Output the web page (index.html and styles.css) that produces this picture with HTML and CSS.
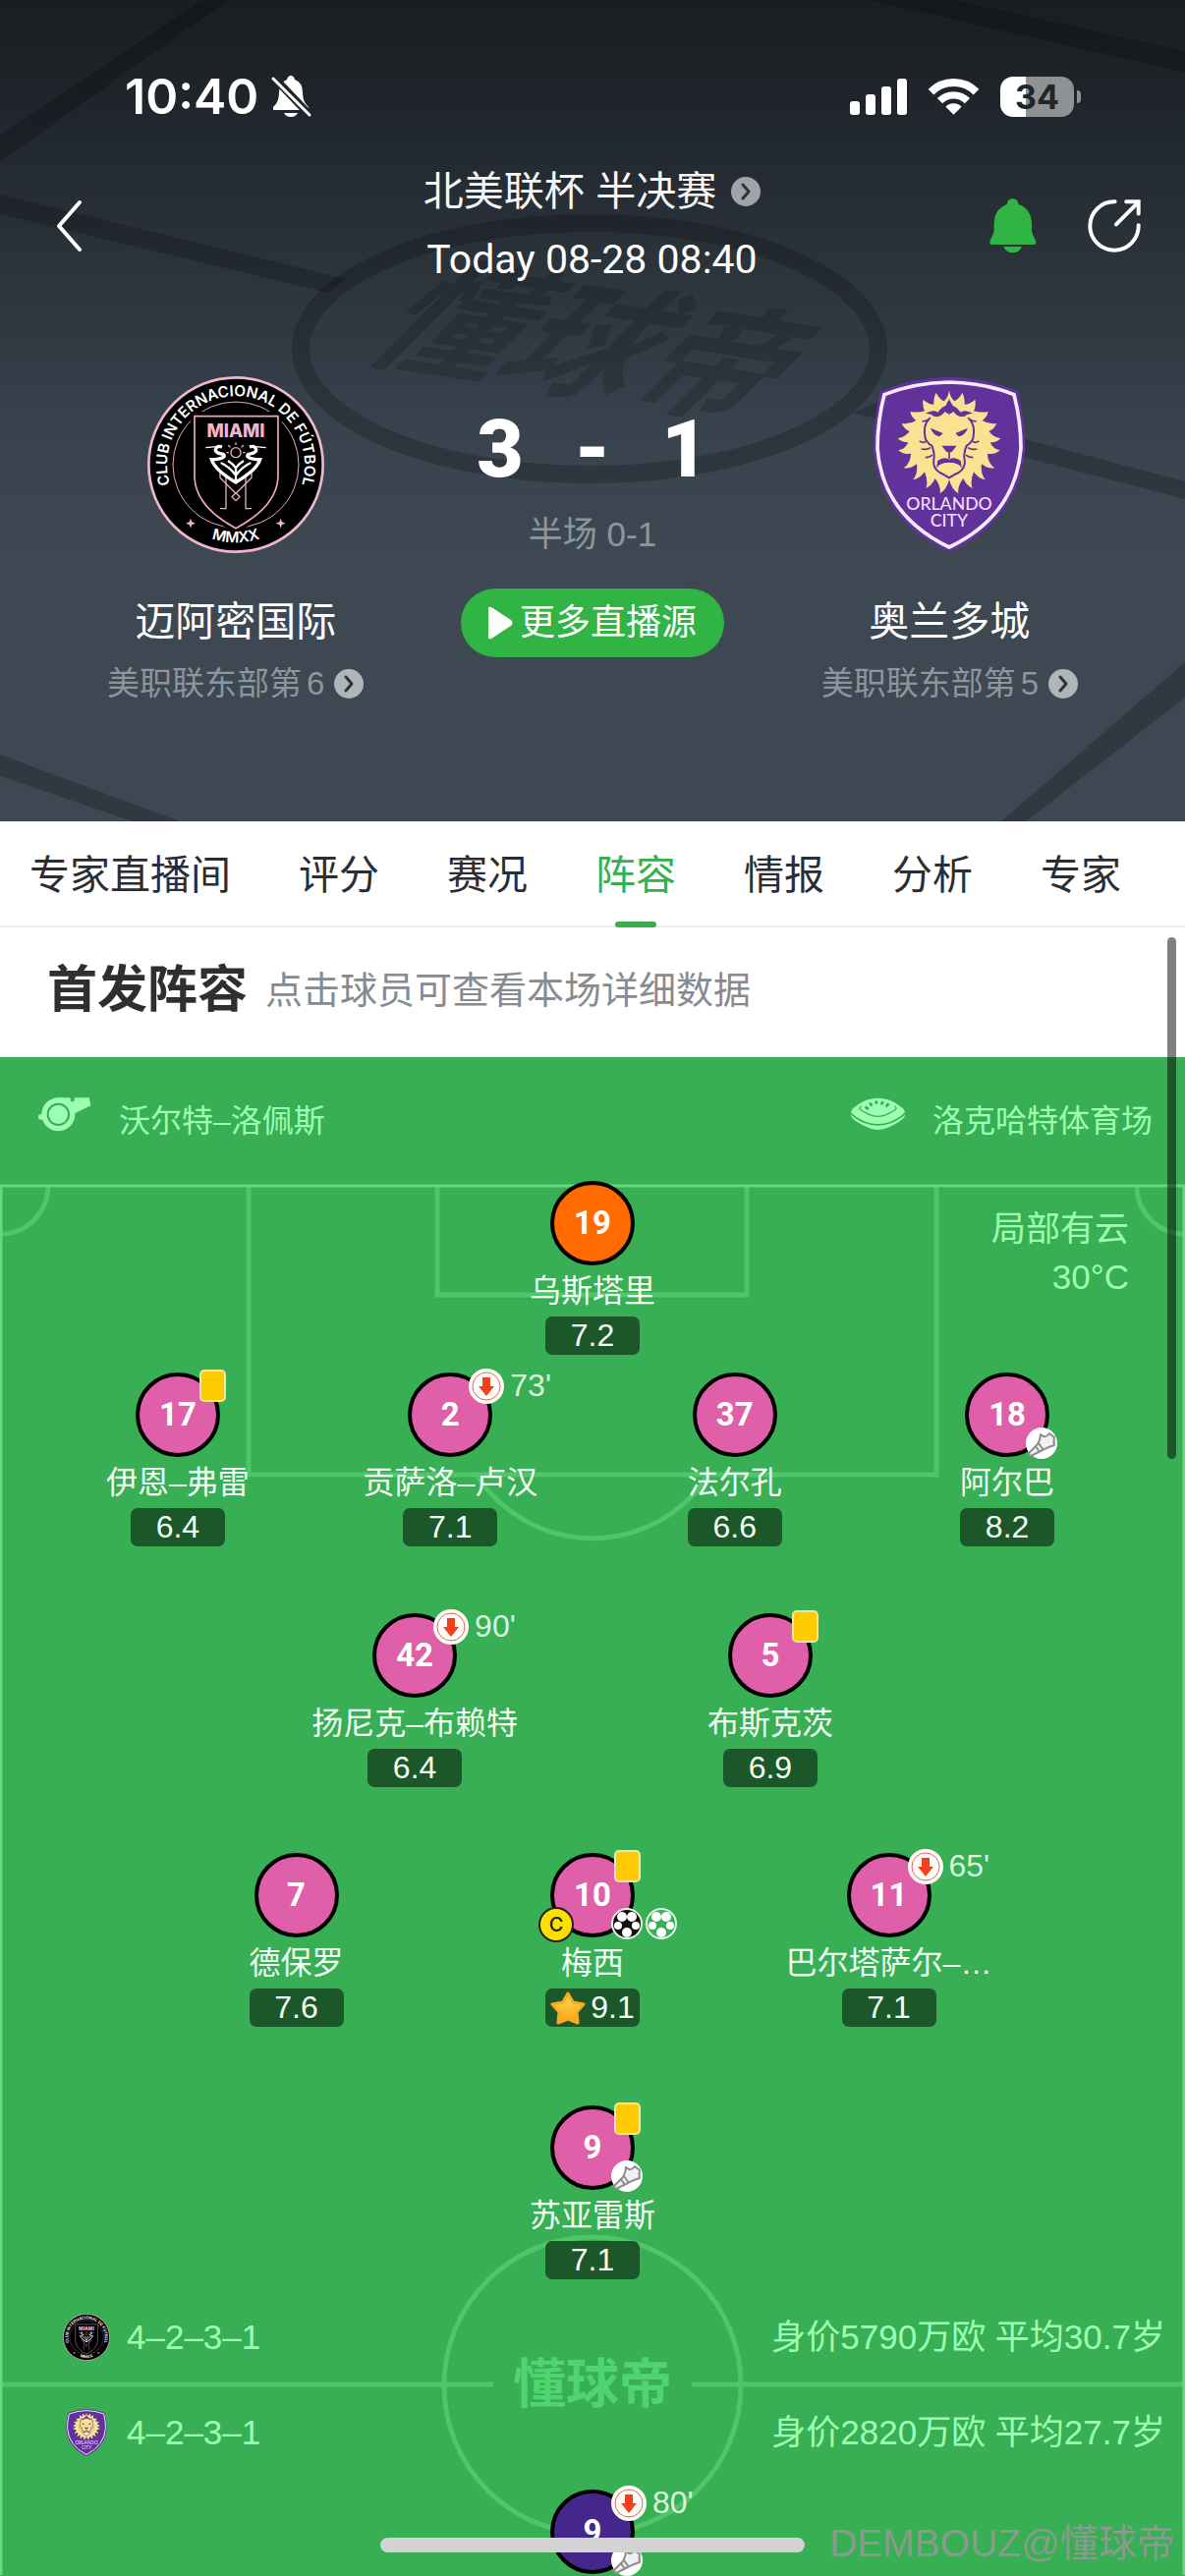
FILE: index.html
```html
<!DOCTYPE html>
<html lang="zh-CN">
<head>
  <meta charset="UTF-8" />
  <meta name="viewport" content="width=device-width, initial-scale=1.0" />
  <title>迈阿密国际 3-1 奥兰多城 - 阵容</title>
  <link rel="stylesheet" href="styles.css">
</head>
<body>
  <!-- shared icons -->
  <svg class="defs" width="0" height="0" aria-hidden="true">
    <symbol id="miami" viewBox="60 42 540 540">
      <circle cx="330" cy="312" r="266" fill="#000" stroke="#efb6ce" stroke-width="8" />
      <circle cx="330" cy="312" r="192" fill="none" stroke="#e9a9c4" stroke-width="3" />
      <path d="M192 150H470V360Q464 455 330 520Q196 455 192 360Z" fill="#000" />
      <path d="M204 164H459V350Q455 440 330 506Q207 440 204 350Z" fill="#000" stroke="#e9a9c4" stroke-width="5" />
      <path id="ringTop" d="M152 424A210 210 0 1 1 508 424" fill="none" />
      <path id="ringBottom" d="M180 496A237 237 0 0 0 480 496" fill="none" />
      <text class="crest-ring"><textPath href="#ringTop" startOffset="50%" text-anchor="middle">CLUB INTERNACIONAL DE FÚTBOL</textPath></text>
      <text class="crest-ring"><textPath href="#ringBottom" startOffset="50%" text-anchor="middle">MMXX</textPath></text>
      <text class="crest-miami" x="330" y="229" text-anchor="middle">MIAMI</text>
      <path d="M192 476l4 11 11 4-11 4-4 11-4-11-11-4 11-4zM467 476l4 11 11 4-11 4-4 11-4-11-11-4 11-4z" fill="#f0b5ce" />
      <g fill="none" stroke="#e9a9c4" stroke-width="4">
        <circle cx="330" cy="275" r="15" />
        <path d="M330 252v-8M313 259l-6-7M347 259l6-7M308 275h-7M352 275h7" />
        <path d="M282 332v20l48 48 48-48v-20M330 398l-12 12 12 12 12-12zM300 350v96h-18M360 350v96h18" />
      </g>
      <g fill="none" stroke="#fff" stroke-width="10">
        <path d="M288 258Q272 252 268 266Q266 276 292 280Q304 290 268 296L256 296Q266 328 330 366Q394 328 404 296L392 296Q356 290 368 280Q394 276 392 266Q388 252 372 258" />
        <path d="M284 306Q310 318 330 344Q350 318 376 306M306 300Q322 310 330 322Q338 310 354 300M330 322v42" stroke-width="7" />
        <path d="M280 256l-42 4M380 256l42 4" stroke-width="4" />
      </g>
    </symbol>
    <symbol id="orlando" viewBox="52 42 470 540">
      <path d="M287 44Q400 46 497 88Q519 180 519 260Q505 480 287 580Q69 480 55 260Q55 180 77 88Q174 46 287 44Z" fill="#61329a" />
      <path d="M287 60Q395 62 485 98Q506 180 506 262Q490 466 287 564Q84 466 68 262Q68 180 89 98Q179 62 287 60Z" fill="none" stroke="#faeaff" stroke-width="11" />
      <path d="M287 85Q290 108 303 118Q318 110 327 92Q336 108 334 128Q350 128 366 113Q370 132 362 148Q382 154 406 150Q402 168 388 177Q408 190 432 186Q426 202 408 210Q422 228 444 232Q432 244 412 244Q420 264 442 268Q428 282 404 278Q404 306 426 322Q406 326 386 310Q382 340 398 358Q378 356 362 334Q350 364 358 384Q340 376 330 354Q312 376 315 400Q296 390 287 358Q278 390 259 400Q262 376 244 354Q234 376 216 384Q224 364 212 334Q196 356 176 358Q192 340 188 310Q168 326 148 322Q170 306 170 278Q146 282 132 268Q154 264 162 244Q142 244 130 232Q152 228 166 210Q148 202 142 186Q166 190 186 177Q172 168 168 150Q192 154 212 148Q204 132 208 113Q224 128 240 128Q238 108 247 92Q256 110 271 118Q284 108 287 85Z" fill="#fbe192" />
      <g fill="#61329a">
        <path d="M214 156Q238 142 252 152Q266 134 276 132L287 112L298 132Q308 134 322 152Q336 142 360 156Q344 154 334 164Q314 170 300 150L287 158L274 150Q260 170 240 164Q230 154 214 156Z" />
        <path d="M230 200L268 216L258 226Q238 222 230 200ZM344 200L306 216L316 226Q336 222 344 200ZM264 254H310L294 274H280ZM252 300Q270 286 287 296Q304 286 322 300L326 322Q316 306 287 306Q258 306 248 322Z" />
      </g>
      <g fill="none" stroke="#61329a" stroke-width="6">
        <path d="M226 172Q206 190 214 232Q222 248 234 254Q244 280 240 296Q236 322 258 336Q272 342 287 352Q302 342 316 336Q338 322 334 296Q330 280 340 254Q352 248 360 232Q368 190 348 172" />
        <path d="M204 180Q222 178 230 168M370 180Q352 178 344 168M287 274V294M196 240Q210 248 216 240M378 240Q364 248 358 240M202 264Q218 268 230 260M372 264Q356 268 344 260M214 290Q228 290 236 282M360 290Q346 290 338 282" stroke-width="5" />
      </g>
      <ellipse cx="287" cy="322" rx="30" ry="17" fill="#fbe192" />
      <text class="crest-orlando" x="287" y="451" text-anchor="middle">ORLANDO</text>
      <text class="crest-orlando" x="287" y="500" text-anchor="middle">CITY</text>
    </symbol>
    <symbol id="more" viewBox="0 0 30 30">
      <circle cx="15" cy="15" r="15" fill="currentColor" />
      <path d="M12 8L18 15L12 22" fill="none" stroke="#2c343c" stroke-width="3" stroke-linecap="round" stroke-linejoin="round" />
    </symbol>
    <symbol id="off" viewBox="0 0 36 36">
      <circle cx="18" cy="18" r="18" fill="#fffdf8" />
      <circle cx="18" cy="18" r="14" fill="none" stroke="#e0665a" stroke-width="1" />
      <path d="M14 9h8v9h4l-8 10-8-10h4z" fill="#f2401f" />
    </symbol>
    <symbol id="boot" viewBox="0 0 32 32">
      <circle cx="16" cy="16" r="16" fill="#fff" />
      <path d="M15 7L18 9Q21 10 24 6L29 10Q28 13 29 18Q22 20 17 23L5 29Q2 28 4 25L12 17Q15 12 15 7ZM10 19L14 25M13 16L18 23" fill="#f1f1f1" stroke="#8c8c8c" stroke-width="2" stroke-linejoin="round" />
    </symbol>
    <symbol id="ball" viewBox="0 0 32 32">
      <circle cx="16" cy="16" r="15" fill="currentColor" stroke="#e6f5e9" stroke-width="2" />
      <g fill="#fff">
        <circle cx="11" cy="9" r="5" />
        <circle cx="21" cy="9" r="5" />
        <circle cx="7" cy="18" r="4" />
        <circle cx="25" cy="18" r="4" />
        <circle cx="16" cy="25" r="5" />
      </g>
    </symbol>
  </svg>

  <header class="match">
    <svg class="match-bg" viewBox="0 0 1206 837" preserveAspectRatio="xMidYMin slice" aria-hidden="true">
      <g fill="#000" opacity="0.2">
        <path d="M205 0H232L0 165V138ZM885 0H972L1206 52V74ZM0 198L352 284L334 298L0 218ZM868 420L896 408L1206 490V508ZM0 768L186 837H138L0 790ZM1206 674V710L1043 837H1018Z" />
      </g>
      <ellipse cx="600" cy="355" rx="294" ry="128" fill="none" stroke="#000" stroke-width="18" opacity="0.2" />
      <text class="bg-logo" transform="translate(604 352) rotate(9) skewX(-36)" text-anchor="middle" y="46">懂球帝</text>
    </svg>

    <div class="status">
      <span class="time">10:40</span>
      <svg width="42" height="44" viewBox="0 0 42 44">
        <path d="M21 1Q24 1 25 5Q33 8 33 18Q33 28 39 33V36H3V33Q9 28 9 18Q9 8 17 5Q18 1 21 1ZM14 39H28Q26 43 21 43Q16 43 14 39Z" fill="#fff" />
        <path d="M2 1L42 43" stroke="#1f252b" stroke-width="8" />
        <path d="M3 4L40 41" stroke="#fff" stroke-width="3" stroke-linecap="round" />
      </svg>
      <div class="signals">
        <svg width="58" height="38" viewBox="0 0 58 38" fill="#fff">
          <rect y="24" width="10" height="14" rx="3" /><rect x="16" y="17" width="10" height="21" rx="3" />
          <rect x="32" y="9" width="10" height="29" rx="3" /><rect x="48" y="1" width="10" height="37" rx="3" />
        </svg>
        <svg width="51" height="38" viewBox="316 55 152 114" fill="none" stroke="#fff">
          <path d="M323 99A97 97 0 0 1 461 99" stroke-width="24" />
          <path d="M350 126A59 59 0 0 1 434 126" stroke-width="22" />
          <path d="M392 168L368 144A34 34 0 0 1 416 144Z" fill="#fff" stroke="none" />
        </svg>
        <span class="battery">34</span>
      </div>
    </div>

    <nav class="topbar">
      <button class="icon-btn" aria-label="返回">
        <svg width="28" height="54" viewBox="0 0 28 54"><path d="M25 3L4 27L25 51" fill="none" stroke="#fff" stroke-width="4" stroke-linecap="round" stroke-linejoin="round" /></svg>
      </button>
      <div class="title">
        <a class="league" href="#">北美联杯 半决赛 <svg width="30" height="30"><use href="#more" /></svg></a>
        <p class="kickoff">Today 08-28 08:40</p>
      </div>
      <div class="actions">
        <button class="icon-btn" aria-label="提醒">
          <svg width="48" height="56" viewBox="505 420 144 168" fill="#30b444">
            <path d="M576 421Q592 421 594 438Q634 452 634 500V518Q636 532 645 546Q651 561 638 561H515Q502 561 508 546Q517 532 519 518V500Q519 452 558 438Q560 421 576 421ZM548 567H604Q596 586 576 586Q556 586 548 567Z" />
          </svg>
        </button>
        <button class="icon-btn" aria-label="分享">
          <svg width="54" height="54" viewBox="800 422 164 164" fill="none" stroke="#fff" stroke-width="12" stroke-linecap="round">
            <path d="M884 429A75 75 0 1 0 957 502M888 499L954 433" />
            <path d="M919 429H957V466" stroke-linejoin="miter" />
          </svg>
        </button>
      </div>
    </nav>

    <section class="scoreboard">
      <div class="team">
        <svg class="crest" role="img" aria-label="Inter Miami"><use href="#miami" /></svg>
        <h2>迈阿密国际</h2>
        <a class="rank" href="#">美职联东部第<span>6</span><svg width="30" height="30"><use href="#more" /></svg></a>
      </div>
      <div class="result">
        <div class="score"><b>3</b><b>-</b><b>1</b></div>
        <p class="half">半场 0-1</p>
        <button class="live">
          <svg width="28" height="34" viewBox="0 0 28 34"><path d="M2 2V32Q2 34 5 33L25 20Q28 17 25 14L5 1Q2 0 2 2Z" fill="#fff" /></svg>更多直播源
        </button>
      </div>
      <div class="team">
        <svg class="crest" role="img" aria-label="Orlando City"><use href="#orlando" /></svg>
        <h2>奥兰多城</h2>
        <a class="rank" href="#">美职联东部第<span>5</span><svg width="30" height="30"><use href="#more" /></svg></a>
      </div>
    </section>
  </header>

  <nav class="tabs">
    <a href="#">专家直播间</a>
    <a href="#">评分</a>
    <a href="#">赛况</a>
    <a href="#" class="active">阵容</a>
    <a href="#">情报</a>
    <a href="#">分析</a>
    <a href="#">专家</a>
  </nav>

  <main>
    <div class="section-title">
      <h1>首发阵容</h1>
      <p>点击球员可查看本场详细数据</p>
    </div>

    <section class="lineup">
      <div class="officials">
        <svg width="54" height="36" viewBox="58 80 162 108">
          <path d="M119 84H155L157 96H167L169 84H213L218 108L160 136L119 135Z" fill="#9dffb3" />
          <circle cx="119" cy="135" r="51" fill="#9dffb3" />
          <circle cx="66" cy="143" r="8" fill="#9dffb3" />
          <circle cx="119" cy="135" r="32" fill="none" stroke="#38af54" stroke-width="6" />
        </svg>
        <span>沃尔特–洛佩斯</span>
        <svg class="stadium" width="55" height="34" viewBox="80 84 166 98">
          <path d="M163 84Q192 85 216 98L240 116Q250 128 244 142Q238 152 204 170Q163 192 122 170Q88 152 82 142Q76 128 86 116L110 98Q134 85 163 84Z" fill="#9dffb3" />
          <path d="M80 130Q90 144 122 158Q163 174 204 158Q236 144 246 130" fill="none" stroke="#38af54" stroke-width="5" />
          <path d="M112 108Q100 116 116 124L136 134Q163 146 190 134L210 124Q226 116 214 108" fill="none" stroke="#38af54" stroke-width="4" />
          <path d="M124 110L134 118M138 98L144 108M158 92V102M178 94L174 104M196 100L188 110" stroke="#38af54" stroke-width="8" />
        </svg>
        <span>洛克哈特体育场</span>
      </div>

      <div class="field">
        <svg class="lines" viewBox="0 0 1206 1416" preserveAspectRatio="xMidYMin slice" aria-hidden="true">
          <g fill="none" stroke="#4fc56c" stroke-width="5">
            <path d="M253 2V296H953V2M445 2V113H760V2" />
            <path d="M485 296A140 140 0 0 0 721 296" />
            <path d="M49 2A49 49 0 0 1 0 51M1157 2A49 49 0 0 0 1206 51" />
            <circle cx="603" cy="1223" r="151" />
            <path d="M0 1222H502M704 1222H1206" />
          </g>
          <path d="M1 1416V2H1205V1416" fill="none" stroke="#65d880" stroke-width="3" />
          <text class="field-logo" x="603" y="1241" text-anchor="middle">懂球帝</text>
        </svg>

        <p class="weather">局部有云<br>30°C</p>

        <div class="row row-1">
          <button class="player">
            <span class="shirt keeper">19</span>
            <span class="name">乌斯塔里</span>
            <span class="rating">7.2</span>
          </button>
        </div>

        <div class="row row-4">
          <button class="player">
            <span class="shirt">17<i class="card"></i></span>
            <span class="name">伊恩–弗雷</span>
            <span class="rating">6.4</span>
          </button>
          <button class="player">
            <span class="shirt">2<span class="sub"><svg width="36" height="36"><use href="#off" /></svg>73'</span></span>
            <span class="name">贡萨洛–卢汉</span>
            <span class="rating">7.1</span>
          </button>
          <button class="player">
            <span class="shirt">37</span>
            <span class="name">法尔孔</span>
            <span class="rating">6.6</span>
          </button>
          <button class="player">
            <span class="shirt">18<span class="events"><svg width="32" height="32"><use href="#boot" /></svg></span></span>
            <span class="name">阿尔巴</span>
            <span class="rating">8.2</span>
          </button>
        </div>

        <div class="row row-2">
          <button class="player">
            <span class="shirt">42<span class="sub"><svg width="36" height="36"><use href="#off" /></svg>90'</span></span>
            <span class="name">扬尼克–布赖特</span>
            <span class="rating">6.4</span>
          </button>
          <button class="player">
            <span class="shirt">5<i class="card"></i></span>
            <span class="name">布斯克茨</span>
            <span class="rating">6.9</span>
          </button>
        </div>

        <div class="row row-3">
          <button class="player">
            <span class="shirt">7</span>
            <span class="name">德保罗</span>
            <span class="rating">7.6</span>
          </button>
          <button class="player">
            <span class="shirt">10<i class="card"></i><span class="captain">C</span>
              <span class="events">
                <svg class="goal" width="32" height="32"><use href="#ball" /></svg>
                <svg class="chance" width="32" height="32"><use href="#ball" /></svg>
              </span>
            </span>
            <span class="name">梅西</span>
            <span class="rating best">
              <svg width="36" height="34" viewBox="0 0 36 34">
                <defs><linearGradient id="gold" x1="0" y1="0" x2="0" y2="1"><stop offset="0" stop-color="#ffdf4a" /><stop offset="1" stop-color="#f9a01b" /></linearGradient></defs>
                <path d="M18 2L23 11L34 13L27 21L28 32L18 28L8 32L9 21L2 13L13 11Z" fill="url(#gold)" stroke="#f9ab22" stroke-width="3" stroke-linejoin="round" />
              </svg>9.1
            </span>
          </button>
          <button class="player">
            <span class="shirt">11<span class="sub"><svg width="36" height="36"><use href="#off" /></svg>65'</span></span>
            <span class="name">巴尔塔萨尔–…</span>
            <span class="rating">7.1</span>
          </button>
        </div>

        <div class="row row-1 striker">
          <button class="player">
            <span class="shirt">9<i class="card"></i><span class="events"><svg width="32" height="32"><use href="#boot" /></svg></span></span>
            <span class="name">苏亚雷斯</span>
            <span class="rating">7.1</span>
          </button>
        </div>

        <div class="formations">
          <div class="formation">
            <svg width="48" height="48"><use href="#miami" /></svg>
            <span>4–2–3–1</span>
            <span class="value">身价5790万欧 平均30.7岁</span>
          </div>
          <div class="formation">
            <svg width="48" height="48"><use href="#orlando" /></svg>
            <span>4–2–3–1</span>
            <span class="value">身价2820万欧 平均27.7岁</span>
          </div>
        </div>

        <div class="row row-1">
          <button class="player">
            <span class="shirt away">9<span class="sub"><svg width="36" height="36"><use href="#off" /></svg>80'</span><span class="events"><svg width="32" height="32"><use href="#boot" /></svg></span></span>
          </button>
        </div>
      </div>
    </section>
  </main>

  <div class="scrollbar"></div>
  <div class="home-bar"></div>
  <div class="watermark">DEMBOUZ@懂球帝</div>
</body>
</html>
```

FILE: styles.css
```css
* { box-sizing: border-box; }
html, body { height: 100%; }
body {
  margin: 0;
  position: relative;
  overflow: hidden;
  background: #38af54;
  font-family: "Liberation Sans", "Noto Sans CJK SC", sans-serif;
  color: #fff;
}
h1, h2, p { margin: 0; font-weight: 400; }
a { color: inherit; text-decoration: none; }
button { font: inherit; color: inherit; background: none; border: 0; padding: 0; }
svg { display: block; flex: none; overflow: visible; }
.defs { display: none; }

/* crest lettering */
.crest-ring { font: 600 46px Inter, sans-serif; fill: #fff; }
.crest-miami { font: 800 55px Inter, sans-serif; fill: #f0b5ce; }
.crest-orlando { font: 500 53px Lato, sans-serif; fill: #f3dcfb; }

/* header */
.match {
  position: relative;
  overflow: hidden;
  padding-bottom: 120px;
  background: linear-gradient(#1a1e21 0, #20262d 120px, #2c343c 280px, #38434e 440px, #3d4853 560px);
}
.match-bg { position: absolute; top: 0; left: 0; width: 100%; height: 100%; }
.bg-logo { font: 700 134px "Noto Sans CJK SC", sans-serif; fill: #000; opacity: 0.16; }

.status {
  position: relative;
  display: flex;
  align-items: center;
  gap: 12px;
  padding: 72px 110px 0 127px;
  height: 124px;
}
.time { font: 600 50px/52px Inter, sans-serif; }
.signals { display: flex; align-items: center; gap: 22px; margin-left: auto; }
.battery {
  position: relative;
  width: 75px;
  height: 41px;
  margin-right: 3px;
  border-radius: 13px;
  background: linear-gradient(90deg, #fff 35%, #8f9294 35%);
  color: #20262c;
  font: 700 34px/41px Inter, sans-serif;
  text-align: center;
}
.battery::after {
  content: "";
  position: absolute;
  left: 78px;
  top: 14px;
  width: 4px;
  height: 13px;
  border-radius: 0 4px 4px 0;
  background: #8f9294;
}

.topbar {
  position: relative;
  display: grid;
  grid-template-columns: 1fr auto 1fr;
  align-items: center;
  margin-top: 47px;
  padding: 0 45px 0 56px;
}
.title { text-align: center; padding-right: 12px; }
.league {
  display: flex;
  align-items: center;
  justify-content: center;
  gap: 15px;
  margin-bottom: 21px;
  font-size: 41px;
  line-height: 48px;
  color: #f5f6f6;
}
.league svg { color: #a0a4a8; }
.kickoff { font: 400 41px/48px Roboto, sans-serif; }
.actions { display: flex; align-items: center; justify-content: flex-end; gap: 52px; }

.scoreboard {
  position: relative;
  display: grid;
  grid-template-columns: repeat(3, 1fr);
  padding: 95px 58px 0;
}
.team, .result { display: flex; flex-direction: column; align-items: center; }
.crest { width: 180px; height: 180px; }
.team h2 { margin-top: 44px; font-size: 41px; line-height: 52px; }
.rank {
  display: flex;
  align-items: center;
  margin-top: 17px;
  font-size: 33px;
  line-height: 40px;
  color: #8d959d;
}
.rank span { margin: 0 10px 0 5px; }
.rank svg { color: #b0b5ba; }
.score {
  display: flex;
  justify-content: center;
  gap: 44px;
  margin-top: 34px;
  font: 700 82px/80px Roboto, sans-serif;
}
.score b { width: 50px; text-align: center; }
.half { margin-top: 27px; font-size: 35px; line-height: 40px; color: #8d959d; }
.live {
  display: flex;
  align-items: center;
  gap: 6px;
  height: 70px;
  margin-top: 35px;
  padding: 0 28px 0 26px;
  border-radius: 35px;
  background: #30b444;
  font-size: 36px;
  line-height: 48px;
}

/* tabs */
.tabs {
  display: flex;
  gap: 69px;
  padding-left: 30px;
  height: 108px;
  background: #fff;
  border-bottom: 2px solid #ececec;
  color: #2b2d33;
  font-size: 41px;
  line-height: 110px;
}
.tabs a { position: relative; flex: none; height: 108px; }
.tabs .active { color: #38af4b; }
.active::after {
  content: "";
  position: absolute;
  left: 50%;
  bottom: 0;
  width: 42px;
  height: 6px;
  margin-left: -21px;
  border-radius: 3px;
  background: #38af4b;
}

.section-title {
  display: flex;
  align-items: center;
  gap: 18px;
  height: 132px;
  padding: 0 48px 4px;
  background: #fff;
}
.section-title h1 { font-size: 51px; font-weight: 700; line-height: 60px; color: #2f2f2f; }
.section-title p { font-size: 38px; line-height: 60px; color: #878b90; }

/* lineup */
.lineup { background: #38af54; color: #9dffb3; }
.officials {
  display: flex;
  align-items: center;
  height: 126px;
  padding: 0 33px 7px 39px;
  font-size: 32px;
  line-height: 40px;
}
.officials svg { margin-right: 28px; margin-bottom: 4px; }
.officials .stadium { margin-left: auto; }
.officials span { padding-top: 10px; }

.field { position: relative; }
.lines { position: absolute; top: 3px; left: 0; width: 100%; height: 1416px; }
.field-logo { font: 700 54px "Noto Sans CJK SC", sans-serif; fill: #4fd470; }
.weather {
  position: absolute;
  top: 24px;
  right: 57px;
  font-size: 35px;
  line-height: 49px;
  text-align: right;
}

.row { position: relative; display: grid; justify-content: center; margin-bottom: 68px; }
.row-1 { grid-template-columns: 30%; margin-bottom: 18px; }
.row-2 { grid-template-columns: 30% 30%; margin-bottom: 67px; }
.row-3 { grid-template-columns: 25% 25% 25%; margin-bottom: 80px; }
.row-4 { grid-template-columns: 22% 24% 24% 22%; }
.striker { margin-bottom: 35px; }
.player {
  display: flex;
  flex-direction: column;
  align-items: center;
  color: #f2fff4;
  font-size: 32px;
}
.shirt {
  position: relative;
  width: 86px;
  height: 86px;
  border: 4px solid #000;
  border-radius: 50%;
  background: #df5fa8;
  color: #fff;
  font: 700 33px/78px Roboto, sans-serif;
  text-align: center;
}
.keeper { background: #ff6b00; }
.away { background: #45278b; }
.name { line-height: 52px; white-space: nowrap; }
.rating {
  display: flex;
  align-items: center;
  justify-content: center;
  width: 96px;
  height: 39px;
  border-radius: 7px;
  background: #1c572a;
  line-height: 39px;
}
.best { gap: 5px; }

/* marks on the shirt */
.card {
  position: absolute;
  top: -7px;
  left: 61px;
  width: 27px;
  height: 33px;
  border: 2px solid #f3e79a;
  border-radius: 5px;
  background: #ffcb00;
}
.sub {
  position: absolute;
  top: -8px;
  left: 58px;
  display: flex;
  gap: 6px;
  color: #d9f5de;
  font: 400 32px/34px "Liberation Sans", sans-serif;
}
.events { position: absolute; top: 52px; left: 58px; display: flex; gap: 3px; }
.goal { color: #111; }
.chance { color: #38af54; }
.captain {
  position: absolute;
  top: 51px;
  left: -16px;
  width: 36px;
  height: 36px;
  border: 2px solid #222;
  border-radius: 50%;
  background: #ffe100;
  color: #222;
  font: 500 20px/32px Inter, sans-serif;
}

.formations { position: relative; display: grid; gap: 49px; margin-bottom: 34px; padding: 0 20px 0 64px; }
.formation { display: flex; align-items: center; gap: 17px; height: 48px; font-size: 35px; line-height: 48px; }
.value { margin-left: auto; }

/* overlays */
.scrollbar {
  position: absolute;
  top: 954px;
  right: 9px;
  width: 9px;
  height: 531px;
  border-radius: 5px;
  background: rgba(0, 0, 0, 0.5);
}
.home-bar {
  position: fixed;
  bottom: 24px;
  left: 50%;
  width: 432px;
  height: 15px;
  margin-left: -216px;
  border-radius: 8px;
  background: #d3d3d3;
}
.watermark {
  position: fixed;
  right: 10px;
  bottom: 9px;
  color: #8a9a8c;
  font-size: 39px;
  line-height: 48px;
}
```
